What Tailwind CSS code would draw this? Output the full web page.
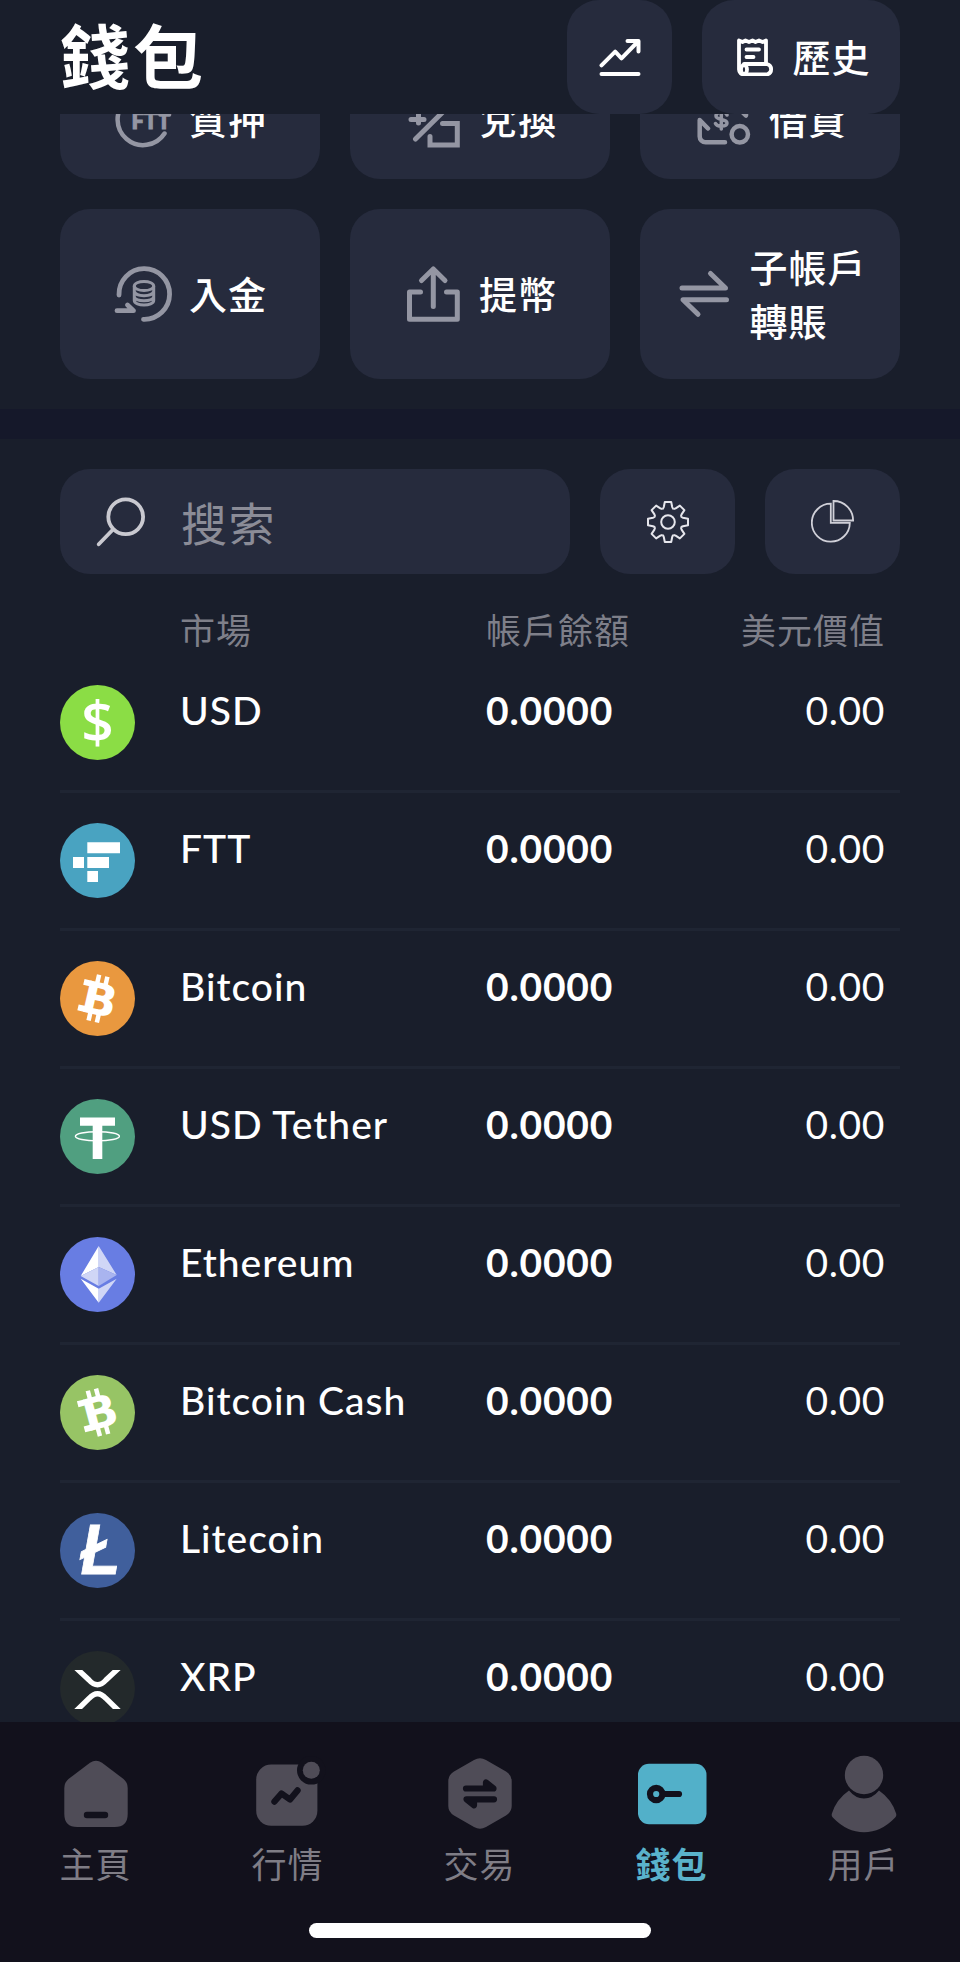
<!DOCTYPE html>
<html lang="zh-Hant">
 <head>
  <meta charset="utf-8"/>
  <meta content="width=device-width, initial-scale=1" name="viewport"/>
  <title>錢包</title>
  <script src="https://cdn.jsdelivr.net/npm/@tailwindcss/browser@4"></script>
 </head>
 <body class="flex h-[1962px] w-[960px] flex-col overflow-hidden bg-[#191e2b] font-['Lato','Noto_Sans_CJK_TC',sans-serif] text-white">
  <header class="flex h-[114px] shrink-0 items-center px-[60px]">
   <h1 class="flex-1 text-[70px] leading-[114px] font-bold tracking-[3px]">錢包</h1>
   <div class="flex h-[114px] gap-[30px]">
    <button aria-label="圖表" class="flex w-[105px] items-center justify-center rounded-[32px] bg-[#262b3d]">
     <svg width="42" height="42" viewBox="0 0 42 42" fill="none" stroke="currentColor" stroke-width="4" stroke-linecap="round" stroke-linejoin="round">
      <path d="M2.5 29.3 16.2 15.7 22.5 22.4 39 5.5M28.5 5H39.5V15.5M2.5 38H39.5"/>
     </svg>
    </button>
    <button class="flex w-[198px] items-center justify-center gap-[18px] rounded-[32px] bg-[#262b3d] pl-[5px] text-[38px] font-medium tracking-[1px]">
     <svg class="shrink-0" width="38" height="38" viewBox="0 0 38 38" fill="none" stroke="currentColor" stroke-width="3.8" stroke-linecap="round" stroke-linejoin="round">
      <path d="M30 25V2.5L26.5 4 23 2.5 19.5 4 16.5 2.5 13 4 9.5 2.5 6.5 4 3 2.5V31.5A5 5 0 0 0 8 36.5H31A5.4 5.4 0 0 0 31 26H8M10.5 11.5H23M10.5 19H17.5"/>
      <ellipse cx="8" cy="31.5" rx="3" ry="4.5"/>
     </svg>
     <span>歷史</span>
    </button>
   </div>
  </header>

  <main class="min-h-0 flex-1 overflow-hidden">
   <!-- Quick actions, scrolled under the header -->
   <section class="-mt-[55px] grid grid-cols-3 grid-rows-[120px_170px] gap-[30px] px-[60px] pb-[30px] text-[38px] leading-[54px] font-medium tracking-[1px]">
    <div class="flex items-center justify-center gap-[15px] rounded-[30px] bg-[#262b3d] pl-px">
     <svg class="text-[#9496a3]" width="60" height="60" viewBox="0 0 60 60" fill="none" stroke="currentColor" stroke-width="4.5" stroke-linecap="round">
      <path d="M50.5 44.5A25.5 25.5 0 1 1 50 16"/>
      <text x="17.5" y="39.5" font-size="22" font-weight="900" letter-spacing="0" fill="currentColor" stroke="currentColor" stroke-width="1">FTT</text>
      <path stroke-width="3.5" d="M46 26H55.5"/>
     </svg>
     <span>質押</span>
    </div>
    <div class="flex items-center justify-center gap-[15px] rounded-[30px] bg-[#262b3d] pl-px">
     <svg class="text-[#9496a3]" width="60" height="60" viewBox="0 0 60 60" fill="none" stroke="currentColor" stroke-width="5" stroke-linecap="round">
      <path d="M48 14 11.5 50M38.5 34.5H53.3V56H26V47.5M7 30.5H20M14.5 22V34"/>
     </svg>
     <span>兌換</span>
    </div>
    <div class="flex items-center justify-center gap-[15px] rounded-[30px] bg-[#262b3d] pl-px">
     <svg class="text-[#9496a3]" width="60" height="60" viewBox="0 0 60 60" fill="none" stroke="currentColor" stroke-width="4.5" stroke-linecap="round" stroke-linejoin="round">
      <path d="M31 53.3H12A6 6 0 0 1 5.7 47V31L14 39.5M45 20 52 26.5V14"/>
      <path stroke-width="3.5" d="M33 26C32 22 22 22 22 27 22 31.5 33 29.5 33 34 33 38 23 38 21.5 34.5M27.3 20V40"/>
      <circle cx="45.8" cy="45.3" r="8.2"/>
     </svg>
     <span>借貸</span>
    </div>
    <div class="flex items-center justify-center gap-[15px] rounded-[30px] bg-[#262b3d] pl-px">
     <svg class="text-[#9496a3]" width="60" height="60" viewBox="0 0 60 60" fill="none" stroke="currentColor" stroke-width="4.8" stroke-linecap="round" stroke-linejoin="round">
      <path d="M5 31A25.3 25.3 0 1 1 29.5 55.3M3 46.7H19.5L13.5 41"/>
      <g stroke-width="3">
       <ellipse cx="30" cy="22" rx="9.7" ry="4.6"/>
       <path d="M20.3 22V36.5C20.3 42.5 39.7 42.5 39.7 36.5V22M20.3 27.5C22 33 38 33 39.7 27.5M20.3 33C22 38 38 38 39.7 33"/>
      </g>
     </svg>
     <span>入金</span>
    </div>
    <div class="flex items-center justify-center gap-[15px] rounded-[30px] bg-[#262b3d] pl-px">
     <svg class="text-[#9496a3]" width="60" height="60" viewBox="0 0 60 60" fill="none" stroke="currentColor" stroke-width="5" stroke-linecap="round" stroke-linejoin="round">
      <path d="M29.3 42.5V5M17.5 16.5 29.3 5 41 16.5M16.5 28H5.5V55.3H53.3V28H42.5"/>
     </svg>
     <span>提幣</span>
    </div>
    <div class="flex items-center justify-center gap-[15px] rounded-[30px] bg-[#262b3d] pl-px">
     <svg class="text-[#9496a3]" width="60" height="60" viewBox="0 0 60 60" fill="none" stroke="currentColor" stroke-width="5" stroke-linecap="round" stroke-linejoin="round">
      <path d="M8 24H51.5L36.5 9.5M52.5 35.7H9L24 50.3"/>
     </svg>
     <span>子帳戶<br/>轉賬</span>
    </div>
   </section>

   <div class="h-[30px] bg-[#15182a]"></div>

   <section class="px-[60px] pt-[30px]">
    <div class="flex h-[105px] gap-[30px]">
     <label class="flex flex-1 items-center gap-[35px] rounded-[30px] bg-[#262b3d] pl-[36px] text-[46px] tracking-[1.5px] text-[#8b8c97]">
      <svg class="text-[#c9c9d0]" width="50" height="50" viewBox="0 0 50 50" fill="none" stroke="currentColor" stroke-width="3.8" stroke-linecap="round">
       <circle cx="29.7" cy="19.8" r="17.4"/>
       <path d="M17 32.5 2.7 47.3"/>
      </svg>
      <span class="pt-[3px]">搜索</span>
     </label>
     <button aria-label="設定" class="flex w-[135px] items-center justify-center rounded-[30px] bg-[#262b3d]">
      <svg width="44" height="44" viewBox="-22 -22 44 44" fill="none" stroke="#e6e6ec" stroke-width="2" stroke-linejoin="round">
       <defs><path id="tooth" d="M-5.4-13Q-4.6-13.8-4.2-15L-3.2-20H3.2L4.2-15Q4.6-13.8 5.4-13"/></defs>
       <circle r="6.8"/>
       <use href="#tooth"/>
       <use href="#tooth" transform="rotate(45)"/>
       <use href="#tooth" transform="rotate(90)"/>
       <use href="#tooth" transform="rotate(135)"/>
       <use href="#tooth" transform="rotate(180)"/>
       <use href="#tooth" transform="rotate(225)"/>
       <use href="#tooth" transform="rotate(270)"/>
       <use href="#tooth" transform="rotate(315)"/>
      </svg>
     </button>
     <button aria-label="分佈" class="flex w-[135px] items-center justify-center rounded-[30px] bg-[#262b3d]">
      <svg width="44" height="44" viewBox="0.7 0.5 44 44" fill="none" stroke="#d0d0d8" stroke-width="1.8">
       <path d="M20.5 4.2A19 19 0 1 0 39.5 23.4H20.5ZM23.2 1.5V21H42.8A19.5 19.5 0 0 0 23.2 1.5Z"/>
      </svg>
     </button>
    </div>

    <div class="flex h-[81px] pl-[120px] pt-[29px] text-[35px] leading-[54px] tracking-[1px] text-[#7e7f89]">
     <span class="w-[306px]">市場</span>
     <span class="flex-1">帳戶餘額</span>
     <span class="pr-[15px]">美元價值</span>
    </div>
    <div id="balances"></div>
   </section>
  </main>

  <nav class="flex h-[240px] shrink-0 flex-col items-center bg-[#12111c]">
   <div class="grid w-full grid-cols-5 justify-items-center pt-[30px] text-[35px] leading-[56px] tracking-[1px] text-[#7f7d86]">
    <a class="flex flex-col items-center">
     <svg width="84" height="84" viewBox="0 0 84 84" fill="#4f4c57">
      <path d="M36 10.8Q42 6.8 48 10.8L69.5 27Q73.7 30.5 73.7 36V62Q73.7 75 60.7 75H23.3Q10.3 75 10.3 62V36Q10.3 30.5 14.5 27Z"/>
      <path d="M33 63H51" stroke="#12111c" stroke-width="6.4" stroke-linecap="round"/>
     </svg>
     <span class="pr-[1px]">主頁</span>
    </a>
    <a class="flex flex-col items-center">
     <svg width="84" height="84" viewBox="0 0 84 84" fill="#4f4c57">
      <rect x="10.2" y="12.5" width="61.2" height="61.3" rx="15"/>
      <circle cx="65.3" cy="18.3" r="14.3" fill="#12111c"/>
      <circle cx="65.3" cy="18.3" r="8.5"/>
      <path d="M28.5 49.5 35.5 41.5 44 47.5 51.5 38.5" fill="none" stroke="#12111c" stroke-width="6.4" stroke-linecap="round" stroke-linejoin="round"/>
     </svg>
     <span class="pr-[1px]">行情</span>
    </a>
    <a class="flex flex-col items-center">
     <svg width="84" height="84" viewBox="0 0 84 84" fill="#4f4c57">
      <path d="M36 8Q42 4.5 48 8L68 19.5Q73.7 23 73.7 29V54Q73.7 60 68 63.5L48 75Q42 78.5 36 75L16 63.5Q10.3 60 10.3 54V29Q10.3 23 16 19.5Z"/>
      <path d="M28 36.5H55.5L48 30.5V36M56 47.3H28.5L36 53.3V48" fill="none" stroke="#12111c" stroke-width="6.2" stroke-linecap="round" stroke-linejoin="round"/>
     </svg>
     <span class="pr-[1px]">交易</span>
    </a>
    <a class="flex flex-col items-center text-[#5ab3cb]">
     <svg width="84" height="84" viewBox="0 0 84 84" fill="#52b0c9">
      <rect x="8" y="11.8" width="68.5" height="60.4" rx="11"/>
      <g fill="none" stroke="#12111c" stroke-width="6.2" stroke-linecap="round">
       <circle cx="26.2" cy="42" r="6.2"/>
       <path d="M34 42H49"/>
      </g>
     </svg>
     <span class="pr-[1px] font-bold">錢包</span>
    </a>
    <a class="flex flex-col items-center">
     <svg width="84" height="84" viewBox="0 0 84 84" fill="#4f4c57">
      <path d="M27 38.5Q14 47.5 9.7 62Q9.4 64 10.8 65.5Q25 80.3 42 80.3T73.2 65.5Q74.6 64 74.3 62Q70 47.5 57 38.5Q50.5 46.5 42 46.5T27 38.5Z"/>
      <circle cx="42" cy="23" r="19.2"/>
     </svg>
     <span class="pr-[1px]">用戶</span>
    </a>
   </div>
   <div class="mt-[31px] h-[15px] w-[342px] rounded-full bg-white"></div>
  </nav>

  <script>
   // Each icon is drawn on a 75x75 disc
   const coinB = '<text x="40" y="53.5" text-anchor="middle" font-family="DejaVu Sans" font-size="44" font-weight="bold" textLength="35" lengthAdjust="spacingAndGlyphs">B</text><path d="M31.5 14H36V23H31.5ZM40 14H44.5V23H40ZM31.5 52H36V61H31.5ZM40 52H44.5V61H40ZM20.5 21.4H28V27.4H20.5ZM20.5 47.5H28V53.5H20.5Z"/>';

    const assets = [
      { name: 'USD', color: '#8bdd45', icon: '<text x="37.5" y="57.5" text-anchor="middle" font-family="Open Sans" font-size="57" font-weight="600" fill="#fff">$</text>' },
      { name: 'FTT', color: '#49a3c1', icon: '<path fill="#fff" d="M27.3 19.3H60V30.3H27.3ZM13 34H24V45H13ZM27.3 34H49V45H27.3ZM27.3 48H38V59H27.3Z"/>' },
      { name: 'Bitcoin', color: '#e9983f', icon: `<g transform="rotate(13 37.5 37.5)" fill="#fff">${coinB}</g>` },
      { name: 'USD Tether', color: '#509f80', icon: '<path fill="#fff" d="M20 18.5H55V26.8H42.3V60H32.7V26.8H20Z"/><ellipse cx="37.4" cy="37.3" rx="22" ry="4.6" fill="none" stroke="#fff" stroke-width="1.4"/>' },
      { name: 'Ethereum', color: '#687de3', icon: '<path fill="#fff" d="M38.7 9V30L20.7 39ZM20.7 41.7 38.7 51.7V65.7Z"/><path fill="#d0d6f6" d="M38.7 9 56.7 38 38.7 30ZM38.7 51.7 56.7 41.7 38.7 65.7ZM20.7 39 38.7 30V49Z"/><path fill="#a9b4ef" d="M38.7 30 56.7 38 38.7 49Z"/>' },
      { name: 'Bitcoin Cash', color: '#97c465', icon: `<g transform="rotate(-15 37.5 37.5)" fill="#fff">${coinB}</g>` },
      { name: 'Litecoin', color: '#405f9c', icon: '<text x="40.5" y="60.5" text-anchor="middle" font-family="Liberation Sans" font-size="70" font-style="italic" font-weight="bold" fill="#fff" stroke="#fff" stroke-width="0.8" textLength="40" lengthAdjust="spacingAndGlyphs">Ł</text>' },
      { name: 'XRP', color: '#23292b', icon: '<svg y="19" width="75" height="39" viewBox="0 19 75 39"><path fill="none" stroke="#fff" stroke-width="5.4" d="M13.5 14.5 29 29Q37.5 38.5 46 29L61.5 14.5M13.5 62.5 29 47.5Q37.5 38 46 47.5L61.5 62.5"/></svg>' },
    ];

    document.getElementById('balances').innerHTML = assets.map((a) => `
      <div class="flex h-[138px] items-start border-b-[3px] border-[#1f2533] pt-[30px] text-[39px] leading-[50px]">
       <svg class="mr-[45px] shrink-0" width="75" height="75" viewBox="0 0 75 75">
        <circle cx="37.5" cy="37.5" r="37.5" fill="${a.color}"/>${a.icon}
       </svg>
       <span class="w-[306px] font-medium tracking-[1px]">${a.name}</span>
       <span class="flex-1 font-bold tracking-[0.8px]">0.0000</span>
       <span class="pr-[15px] tracking-[0.6px]">0.00</span>
      </div>`).join('');
  </script>
 </body>
</html>
